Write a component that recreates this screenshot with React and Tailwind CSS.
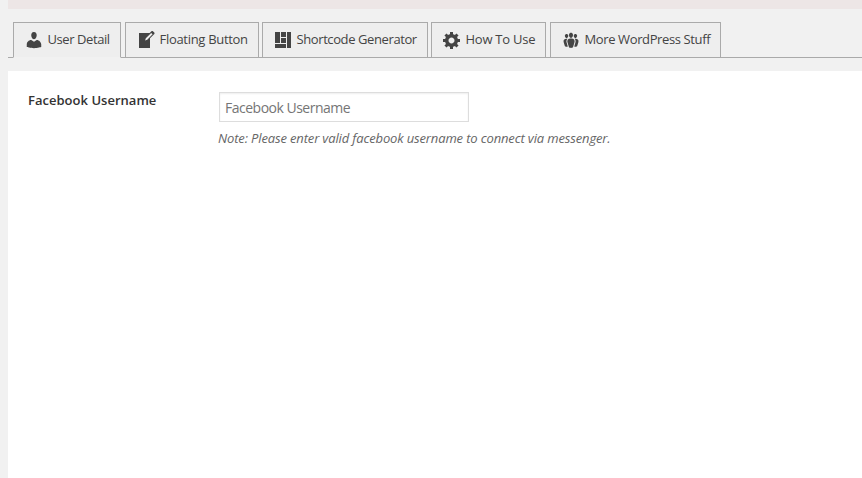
const icons = {
  user: 'M10 9.25c-2.27 0-2.73-3.44-2.73-3.44C7 4.02 7.82 2 9.97 2c2.16 0 2.98 2.02 2.71 3.81 0 0-.41 3.44-2.68 3.44zm0 2.57L12.72 10c2.39 0 4.52 2.33 4.52 4.53v2.49s-3.65 1.13-7.24 1.13c-3.65 0-7.24-1.13-7.24-1.13v-2.49c0-2.25 1.94-4.48 4.47-4.48z',
  write: 'M16.89 1.2l1.41 1.41c.39.39.39 1.02 0 1.41L14 8.33V18H3V3h10.67l1.8-1.8c.4-.39 1.03-.4 1.42 0zm-5.66 8.48l5.37-5.36-1.42-1.42-5.36 5.37-.71 2.12z',
  layout: 'M2 2h5v11H2V2zm6 0h5v5H8V2zm6 0h4v16h-4V2zM8 8h5v5H8V8zm-6 6h11v4H2v-4z',
  gear: 'M18 12h-2.18c-.17.7-.44 1.35-.81 1.93l1.54 1.54-2.1 2.1-1.54-1.54c-.58.36-1.23.63-1.91.79V19H8v-2.18c-.68-.16-1.33-.43-1.91-.79l-1.54 1.54-2.12-2.12 1.54-1.54c-.36-.58-.63-1.23-.79-1.91H1V9.03h2.17c.16-.7.44-1.35.8-1.94L2.43 5.55l2.1-2.1 1.54 1.54c.58-.37 1.24-.64 1.93-.81V2h3v2.18c.68.16 1.33.43 1.91.79l1.54-1.54 2.12 2.12-1.54 1.54c.36.59.64 1.24.8 1.94H18V12zm-8.5 1.5c1.66 0 3-1.34 3-3s-1.34-3-3-3-3 1.34-3 3 1.34 3 3 3z',
  groups: 'M8.03 4.46c-.29 1.28.55 3.46 1.97 3.46 1.41 0 2.25-2.18 1.96-3.46-.22-.98-1.08-1.63-1.96-1.63-.89 0-1.74.65-1.97 1.63zm-4.13.9c-.25 1.08.47 2.93 1.67 2.93s1.92-1.85 1.67-2.93c-.19-.83-.92-1.39-1.67-1.39s-1.48.56-1.67 1.39zm8.86 0c-.25 1.08.47 2.93 1.66 2.93 1.2 0 1.92-1.85 1.67-2.93-.19-.83-.92-1.39-1.67-1.39-.74 0-1.47.56-1.66 1.39zm-.59 11.43l1.25-4.3C14.2 10 12.71 8.47 10 8.47c-2.72 0-4.21 1.53-3.44 4.02l1.26 4.3C8.05 17.51 9 18 10 18c.98 0 1.94-.49 2.17-1.21zM6.1 9.16c-.5.67-.96 1.83-.42 3.59l1.12 3.79c-.34.2-.77.31-1.2.31-.85 0-1.65-.41-1.85-1.03l-1.07-3.65c-.65-2.11.61-3.4 2.92-3.4.27 0 .54.02.79.06-.1.1-.2.22-.29.33zm8.35-.39c2.31 0 3.58 1.29 2.92 3.4l-1.07 3.65c-.2.62-1 1.03-1.85 1.03-.43 0-.86-.11-1.2-.31l1.11-3.77c.55-1.78.08-2.94-.41-3.61-.08-.11-.18-.23-.28-.33.25-.04.51-.06.78-.06z',
};

const tabs = [
  { label: 'User Detail', icon: 'user', active: true, box: 'w-[108px]', gap: 'w-1', text: 'tracking-[-0.42px]' },
  { label: 'Floating Button', icon: 'write', box: 'w-[134px]', gap: 'w-[3px]', text: 'tracking-[-0.3px]' },
  { label: 'Shortcode Generator', icon: 'layout', box: 'w-[166px]', gap: 'w-[3px]', text: 'tracking-[-0.4px]' },
  { label: 'How To Use', icon: 'gear', box: 'w-[115px]', gap: 'w-1', text: 'tracking-[-0.25px]' },
  { label: 'More WordPress Stuff', icon: 'groups', box: 'w-[171px]', gap: 'grow', text: 'tracking-[-0.38px]' },
];

function Tab({ tab }) {
  return (
    <button
      className={`flex h-9 shrink-0 items-start border border-[#aaa] bg-[#eee] pl-2.5 pt-[7px] ${tab.box} ${
        tab.active ? 'border-b-[#f1f1f1]' : ''
      }`}
    >
      <svg viewBox="0 0 20 20" className="size-5 shrink-0 fill-[#444]">
        <path d={icons[tab.icon]} />
      </svg>
      <span className={`-mt-px ml-[3.5px] whitespace-nowrap text-[13px] leading-5 text-[#444] ${tab.text}`}>{tab.label}</span>
    </button>
  );
}

export default function App() {
  return (
    <div className="flex h-screen flex-col overflow-hidden bg-[#f1f1f1] pl-2 font-['Open_Sans','Noto_Sans',sans-serif]">
      <div className="h-[9px] shrink-0 bg-[#ede6e6]" />
      <nav className="mt-[13px] flex h-9 shrink-0">
        <div className="w-[5px] border-b border-[#aaa]" />
        {tabs.map((tab) => (
          <div key={tab.label} className={tab.gap === 'grow' ? 'flex grow' : 'flex'}>
            <Tab tab={tab} />
            <div className={`border-b border-[#aaa] ${tab.gap}`} />
          </div>
        ))}
      </nav>
      <main className="mt-[13px] flex grow bg-white pl-5 pt-[21px]">
        <label htmlFor="username" className="w-[190px] shrink-0 text-[13px] font-semibold leading-[17px] tracking-[0.02px] text-[#333]">
          Facebook Username
        </label>
        <div>
          <input
            id="username"
            placeholder="Facebook Username"
            className="ml-px block h-[30px] w-[250px] border border-[#ddd] bg-white px-[5px] text-[14px] tracking-[-0.5px] shadow-[inset_0_1px_2px_rgba(0,0,0,0.07)] placeholder:text-[#757575]"
          />
          <p className="mt-[6px] whitespace-nowrap text-[13px] italic leading-5 tracking-[-0.14px] text-[#666]">
            Note: Please enter valid facebook username to connect via messenger.
          </p>
        </div>
      </main>
    </div>
  );
}
